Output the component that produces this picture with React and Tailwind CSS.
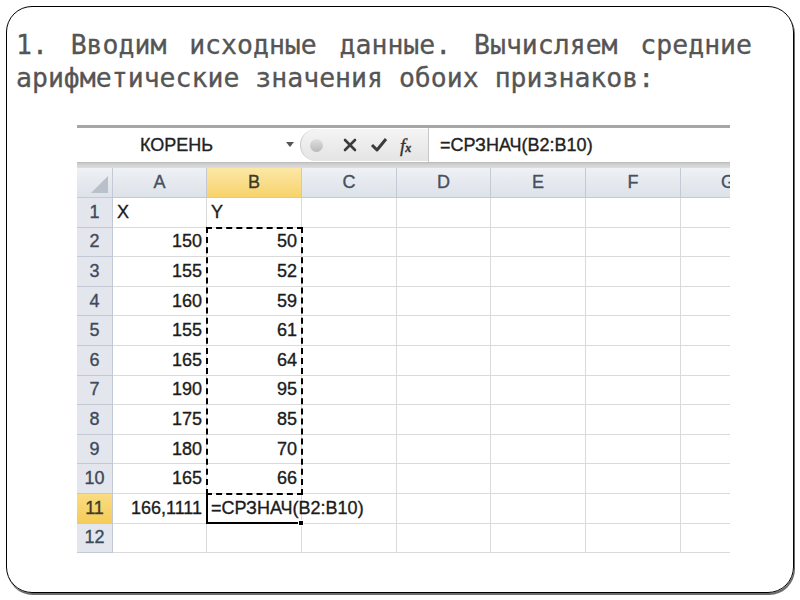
import React from "react";

const cols = ["A", "B", "C", "D", "E", "F", "G"];
const rows = [
  ["X", "Y"],
  ["150", "50"],
  ["155", "52"],
  ["160", "59"],
  ["155", "61"],
  ["165", "64"],
  ["190", "95"],
  ["175", "85"],
  ["180", "70"],
  ["165", "66"],
  ["166,1111", ""],
  ["", ""],
];

function HeaderCell({ children, selected }) {
  return (
    <div
      className={
        "h-[30px] flex items-center justify-center border-r border-b border-[#c3cad5] text-[18px] " +
        (selected
          ? "bg-gradient-to-b from-[#fbe7a6] to-[#f8d36a] text-[#3d3a2a]"
          : "bg-gradient-to-b from-[#eef1f5] to-[#dde2e9] text-[#46505f]")
      }
    >
      {children}
    </div>
  );
}

export default function App() {
  return (
    <div className="w-[800px] h-[600px] bg-white pt-[6px] pl-[6px]">
      <div className="w-[788px] h-[587px] border border-black rounded-[26px] shadow-[1px_2px_0_#6b6b6b] pl-[9px] pt-[21px]">
        <p
          className="w-[736px] text-justify text-[26.5px] leading-[33px] text-[#555] [-webkit-text-stroke:0.3px_#555]"
          style={{ fontFamily: '"DejaVu Sans Mono", monospace', textAlignLast: "left" }}
        >
          1. Вводим исходные данные. Вычисляем средние арифметические значения обоих признаков:
        </p>

        <div
          className="ml-[61px] mt-[31px] w-[653px] overflow-hidden text-[18px] [-webkit-text-stroke:0.35px_currentColor]"
          style={{ fontFamily: '"Liberation Sans", Arial, sans-serif' }}
        >
          <div className="h-[3px] bg-[#a6a6a6]" />
          <div className="h-[34px] flex items-stretch bg-white">
            <div className="w-[223px] flex items-center relative">
              <span className="ml-[63px] text-[#222] text-[18px]">КОРЕНЬ</span>
              <span className="absolute left-[209px] top-[14px] w-0 h-0 border-l-[4px] border-r-[4px] border-t-[5px] border-l-transparent border-r-transparent border-t-[#555]" />
            </div>
            <div className="w-[128px] flex items-center bg-gradient-to-b from-[#f4f4f4] to-[#e4e4e4] rounded-l-[17px] border-l border-[#c9c9c9] my-[1px]">
              <div className="ml-[9px] w-[13px] h-[13px] rounded-full bg-gradient-to-b from-[#e0e0e0] to-[#b9b9b9]" />
              <svg className="ml-[20px]" width="14" height="14" viewBox="0 0 14 14">
                <path d="M2 2 L12 12 M12 2 L2 12" stroke="#3c3c3c" strokeWidth="2.6" strokeLinecap="round" />
              </svg>
              <svg className="ml-[13px]" width="18" height="16" viewBox="0 0 18 16">
                <path d="M2 8 L7 13 L16 2" stroke="#3c3c3c" strokeWidth="3" fill="none" strokeLinejoin="round" />
              </svg>
              <span
                className="ml-[12px] italic text-[19px] text-[#333] leading-none"
                style={{ fontFamily: '"Liberation Serif", serif' }}
              >
                f<span className="text-[12px] font-bold">x</span>
              </span>
            </div>
            <div className="flex-1 flex items-center border-l border-[#c9c9c9] pl-[11px] text-[#222] text-[18px]">
              =СРЗНАЧ(B2:B10)
            </div>
          </div>
          <div className="h-[6px] bg-gradient-to-b from-[#c9c9c9] to-[#dedede] border-t border-[#bdbdbd]" />

          <div className="relative grid grid-cols-[36px_94px_95px_95px_94px_95px_95px_95px] w-[699px]">
            <div className="h-[30px] border-r border-b border-[#c3cad5] bg-gradient-to-b from-[#eef1f5] to-[#dde2e9] relative">
              <svg className="absolute right-[4px] bottom-[4px]" width="17" height="17" viewBox="0 0 17 17">
                <path d="M17 0 L17 17 L0 17 Z" fill="#b9c0c9" />
              </svg>
            </div>
            {cols.map((c) => (
              <HeaderCell key={c} selected={c === "B"}>
                {c}
              </HeaderCell>
            ))}

            {rows.map((r, i) => {
              const n = i + 1;
              const sel = n === 11;
              return (
                <React.Fragment key={n}>
                  <div
                    className={
                      "h-[29.6px] flex items-center justify-center border-r border-b border-[#c3cad5] " +
                      (sel
                        ? "bg-gradient-to-b from-[#f9dc82] to-[#f5cc58] text-[#3d3a2a]"
                        : "bg-[#e3e7ed] text-[#3e4a5a]")
                    }
                  >
                    {n}
                  </div>
                  <div
                    className={
                      "h-[29.6px] flex items-center border-r border-b border-[#dadada] text-[#1c1c1c] px-[4px] " +
                      (n === 1 ? "justify-start" : "justify-end")
                    }
                  >
                    {r[0]}
                  </div>
                  <div
                    className={
                      "h-[29.6px] flex items-center border-r border-b border-[#dadada] text-[#1c1c1c] px-[4px] whitespace-nowrap overflow-visible relative z-10 " +
                      (n === 1 ? "justify-start" : "justify-end")
                    }
                  >
                    {n === 11 ? (
                      <span className="absolute left-[4px]">=СРЗНАЧ(B2:B10)</span>
                    ) : (
                      r[1]
                    )}
                  </div>
                  {[0, 1, 2, 3, 4].map((k) => (
                    <div key={k} className="h-[29.6px] border-b border-r border-[#dadada]" />
                  ))}
                </React.Fragment>
              );
            })}

            <div className="absolute left-[129px] top-[59px] w-[97px] h-[268px] border-2 border-dashed border-black z-20 pointer-events-none" />
            <div className="absolute left-[129px] top-[326px] w-[96px] h-[30px] border-l-2 border-b-2 border-black z-20" />
            <div className="absolute left-[221px] top-[352px] w-[6px] h-[6px] bg-black border border-white z-30" />
          </div>
        </div>
      </div>
    </div>
  );
}
